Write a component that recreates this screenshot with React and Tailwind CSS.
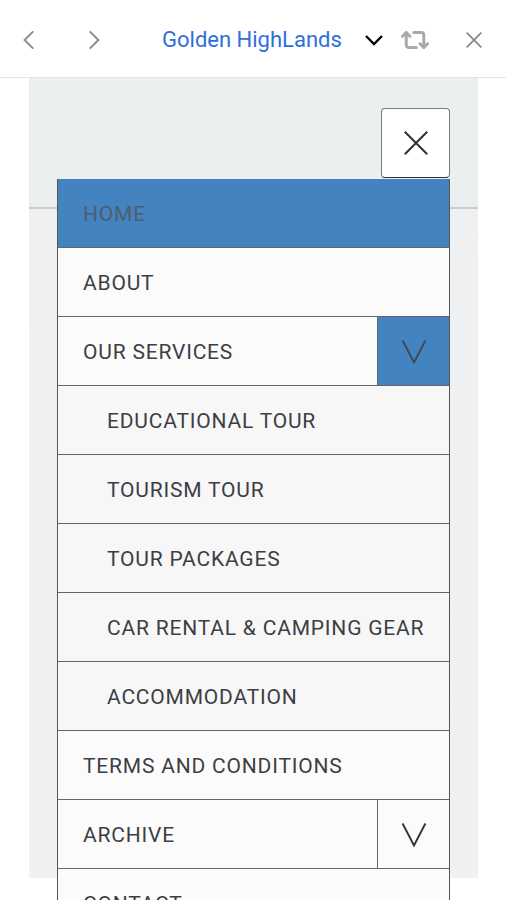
import React from 'react';
import { Repeat2 } from 'lucide-react';

const menu = [
  { label: 'HOME', active: true },
  { label: 'ABOUT' },
  { label: 'OUR SERVICES', toggle: 'open' },
  { label: 'EDUCATIONAL TOUR', sub: true },
  { label: 'TOURISM TOUR', sub: true },
  { label: 'TOUR PACKAGES', sub: true },
  { label: 'CAR RENTAL & CAMPING GEAR', sub: true },
  { label: 'ACCOMMODATION', sub: true },
  { label: 'TERMS AND CONDITIONS' },
  { label: 'ARCHIVE', toggle: 'closed' },
  { label: 'CONTACT' },
];

const Chevron = ({ className }) => (
  <svg viewBox="0 0 40 40" className={className} fill="none" stroke="currentColor" strokeWidth="2">
    <path d="M8 9 L20 32 L32 9" />
  </svg>
);

const App = () => {
  return (
    <div className="w-[506px] h-[900px] overflow-hidden bg-white relative" style={{ fontFamily: 'Roboto, "Liberation Sans", sans-serif' }}>
      {/* Top bar */}
      <div className="h-[78px] flex items-center border-b border-[#e3e3e3] bg-white pt-[2px]">
        <svg viewBox="0 0 24 24" className="w-[26px] h-[26px] ml-[17px] text-[#8a8a8a]" fill="none" stroke="currentColor" strokeWidth="1.8">
          <path d="M15 4 L7 12 L15 20" />
        </svg>
        <svg viewBox="0 0 24 24" className="w-[26px] h-[26px] ml-[37px] text-[#8a8a8a]" fill="none" stroke="currentColor" strokeWidth="1.8">
          <path d="M9 4 L17 12 L9 20" />
        </svg>
        <div className="ml-[56px] w-[182px] text-[22px] text-[#2f6ee0] whitespace-nowrap">Golden HighLands</div>
        <svg viewBox="0 0 24 24" className="w-[24px] h-[24px] ml-[18px] text-black" fill="none" stroke="currentColor" strokeWidth="2.4">
          <path d="M4 8 L12 16 L20 8" />
        </svg>
        <Repeat2 className="w-[30px] h-[30px] ml-[14px] text-[#a9a9a9]" strokeWidth={2.4} />
        <svg viewBox="0 0 24 24" className="w-[22px] h-[22px] ml-[33px] text-[#8a8a8a]" fill="none" stroke="currentColor" strokeWidth="2">
          <path d="M4 4 L20 20 M20 4 L4 20" />
        </svg>
      </div>

      {/* Page panel */}
      <div className="mx-[29px] w-[449px] h-[800px] bg-[#eceff0] relative">
        <div className="h-[129px]"></div>
        <div className="h-[2px] bg-[#c9cbcc]"></div>
        <div className="h-[669px] bg-gradient-to-b from-[#eef0f1] to-[#f0f1f2]"></div>

        {/* close button */}
        <div className="absolute left-[352px] top-[30px] w-[69px] h-[70px] bg-white border border-[#7a7a7a] border-b-[#333] rounded-[4px] flex items-center justify-center">
          <svg viewBox="0 0 30 30" className="w-[28px] h-[28px] text-[#333]" fill="none" stroke="currentColor" strokeWidth="2.2">
            <path d="M3 3 L27 27 M27 3 L3 27" />
          </svg>
        </div>

        {/* menu */}
        <div className="absolute left-[28px] top-[101px] w-[393px] border-x border-[#555] bg-[#f9fafa]">
          {menu.map((item, i) => (
            <div
              key={i}
              className={`h-[69px] flex items-stretch border-b border-[#666] ${
                item.active ? 'bg-[#4383c0]' : item.sub ? 'bg-[#f7f7f7]' : 'bg-[#fbfbfb]'
              }`}
            >
              <div
                className={`flex-1 flex items-center pt-[3px] text-[21px] tracking-[0.8px] ${item.sub ? 'pl-[49px]' : 'pl-[25px]'} ${
                  item.active ? 'text-[#4d5d6e]' : 'text-[#3b3f45]'
                }`}
              >
                {item.label}
              </div>
              {item.toggle && (
                <div
                  className={`w-[72px] flex items-center justify-center border-l border-[#666] ${
                    item.toggle === 'open' ? 'bg-[#4383c0] text-[#3d4a58]' : 'text-[#333]'
                  }`}
                >
                  <Chevron className="w-[38px] h-[38px]" />
                </div>
              )}
            </div>
          ))}
        </div>
      </div>
    </div>
  );
};

export default App;
